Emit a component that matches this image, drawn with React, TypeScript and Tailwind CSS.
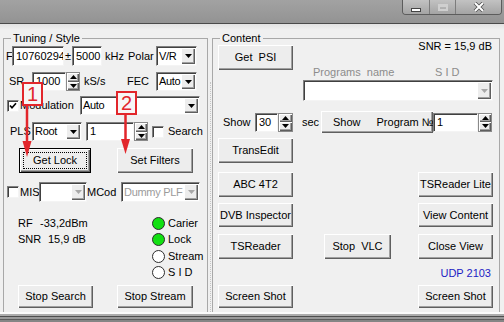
import React from 'react';

const raised =
  'bg-[#ededed] shadow-[inset_1px_1px_0_#ffffff,inset_-1px_-1px_0_#5f5f5f,inset_-2px_-2px_0_#a0a0a0]';
const sunken =
  'bg-white border border-t-[#7f7f7f] border-l-[#7f7f7f] border-r-[#f4f4f4] border-b-[#f4f4f4] shadow-[inset_1px_1px_0_#404040]';

function Btn({ children, className = '', focus = false }: { children: React.ReactNode; className?: string; focus?: boolean }) {
  return (
    <div
      className={`relative flex items-center justify-center whitespace-pre text-black ${raised} ${focus ? 'border border-black' : ''} ${className}`}
    >
      {focus && <div className="absolute inset-[3px] border border-dotted border-black" />}
      {children}
    </div>
  );
}

function Field({ text, className = '' }: { text: string; className?: string }) {
  return <div className={`flex items-center pl-[3px] overflow-hidden whitespace-nowrap ${sunken} ${className}`}>{text}</div>;
}

function Down({ dim = false }: { dim?: boolean }) {
  return (
    <svg width="7" height="4" viewBox="0 0 7 4">
      <path d="M0 0h7L3.5 4z" fill={dim ? '#a8a8a8' : '#000'} />
    </svg>
  );
}

function Up() {
  return (
    <svg width="7" height="4" viewBox="0 0 7 4">
      <path d="M0 4h7L3.5 0z" fill="#000" />
    </svg>
  );
}

function Combo({ text = '', className = '', disabled = false }: { text?: string; className?: string; disabled?: boolean }) {
  return (
    <div className={`flex p-[1px] ${sunken} ${className}`}>
      <div className={`flex-1 min-w-0 flex items-center pl-[1px] tracking-[-0.3px] overflow-hidden whitespace-nowrap ${disabled ? 'text-[#9b9b9b]' : 'text-black'}`}>
        {text}
      </div>
      <div className={`w-[14px] shrink-0 flex items-center justify-center ${raised}`}>
        <Down dim={disabled} />
      </div>
    </div>
  );
}

function Spin({ className = '' }: { className?: string }) {
  return (
    <div className={`flex flex-col border border-[#8a8a8a] ${className}`}>
      <div className={`flex-1 flex items-center justify-center ${raised}`}>
        <Up />
      </div>
      <div className={`flex-1 flex items-center justify-center ${raised}`}>
        <Down />
      </div>
    </div>
  );
}

function Check({ checked = false, className = '' }: { checked?: boolean; className?: string }) {
  return (
    <div className={`w-[12px] h-[12px] shrink-0 flex items-center justify-center ${sunken} ${className}`}>
      {checked && (
        <svg width="8" height="8" viewBox="0 0 8 8">
          <path d="M1 3.5 3 5.7 7 1.3" stroke="#000" strokeWidth="1.7" fill="none" />
        </svg>
      )}
    </div>
  );
}

function Led({ on = false, label }: { on?: boolean; label: string }) {
  return (
    <div className="flex items-center h-[16.5px]">
      <div className={`w-[13px] h-[13px] rounded-full border border-[#2c2c2c] ${on ? 'bg-[#12e012]' : 'bg-white'}`} />
      <span className="ml-[3px]">{label}</span>
    </div>
  );
}

export default function App() {
  return (
    <div className="relative w-[504px] h-[322px] overflow-hidden flex flex-col bg-[#f0f0f0] text-[11px] leading-[13px] text-black font-['Liberation_Sans',Arial,sans-serif]">
      {/* title bar */}
      <div className="h-[23px] shrink-0 flex justify-end pr-[2px] bg-linear-to-b from-[#a2a2a2] to-[#939393]">
        <div className="flex h-[15px] border border-t-0 border-[#5c5c5c] rounded-b-[4px] overflow-hidden">
          <div className="w-[27px] flex items-end justify-center pb-[2px] border-r border-[#7c7c7c] bg-linear-to-b from-[#c2c2c2] to-[#a4a4a4]">
            <div className="w-[10px] h-[4px] bg-white border border-[#444]" />
          </div>
          <div className="w-[26px] flex items-center justify-center border-r border-[#7c7c7c] bg-linear-to-b from-[#c2c2c2] to-[#a4a4a4]">
            <div className="w-[10px] h-[7px] border-2 border-[#cfcfcf] border-t-[3px]" />
          </div>
          <div className="w-[45px] flex items-center justify-center bg-linear-to-b from-[#c2c2c2] to-[#a4a4a4]">
            <svg width="12" height="10" viewBox="0 0 12 10">
              <path d="M2 1l8 8M10 1l-8 8" stroke="#505050" strokeWidth="3.6" />
              <path d="M2 1l8 8M10 1l-8 8" stroke="#fff" strokeWidth="2" />
            </svg>
          </div>
        </div>
      </div>
      <div className="h-[1px] shrink-0 bg-[#4a4a4a]" />

      {/* body */}
      <div className="h-[288px] shrink-0 flex pt-[8px] pl-[3px] overflow-hidden bg-linear-to-b from-[#e2e2e2] to-[#f0f0f0] to-[6px]">
        {/* Tuning / Style */}
        <fieldset className="w-[205px] h-[300px] shrink-0 border border-[#a8a8a8]">
          <legend className="ml-[7px] px-[2px] leading-[13px]">Tuning / Style</legend>

          <div className="flex items-center h-[20px] mt-[1px]">
            <span className="w-[8px] pl-[2px]">F</span>
            <Field text="10760294" className="w-[52px] h-full" />
            <span className="w-[8px] text-center">±</span>
            <Field text="5000" className="w-[30px] h-full" />
            <span className="w-[26px] pl-[3px]">kHz</span>
            <span className="w-[28px]">Polar</span>
            <Combo text="V/R" className="w-[41px] h-full" />
          </div>

          <div className="flex items-center h-[19px] mt-[6px]">
            <span className="w-[28px] pl-[5px]">SR</span>
            <Field text="1000" className="w-[34px] h-full" />
            <Spin className="w-[14px] h-full" />
            <span className="w-[47px] pl-[4px]">kS/s</span>
            <span className="w-[29px]">FEC</span>
            <Combo text="Auto" className="w-[41px] h-full" />
          </div>

          <div className="flex items-center h-[19px] mt-[5px]">
            <Check checked className="ml-[3px]" />
            <span className="w-[61px] pl-[1px]">Modulation</span>
            <Combo text="Auto" className="w-[120px] h-full" />
          </div>

          <div className="flex items-center h-[19px] mt-[7px]">
            <span className="w-[28px] pl-[6px] overflow-hidden whitespace-nowrap">PLS</span>
            <Combo text="Root" className="w-[50px] h-full" />
            <Field text="1" className="w-[48px] h-full ml-[4px]" />
            <Spin className="w-[14px] h-full" />
            <Check className="ml-[4px]" />
            <span className="ml-[4px]">Search</span>
          </div>

          <div className="flex items-center h-[25px] mt-[7px]">
            <Btn focus className="w-[72px] h-full ml-[15px]">Get Lock</Btn>
            <Btn className="w-[76px] h-full ml-[26px]">Set Filters</Btn>
          </div>

          <div className="flex items-center h-[20px] mt-[9px]">
            <Check className="ml-[3px]" />
            <span className="w-[20px] pl-[1px]">MIS</span>
            <Combo disabled className="w-[48px] h-full" />
            <span className="w-[34px] overflow-hidden whitespace-nowrap">MCod</span>
            <Combo disabled text="Dummy PLF" className="w-[79px] h-full" />
          </div>

          <div className="flex mt-[13px]">
            <div className="w-[148px] pl-[14px]">
              <div className="flex items-center h-[16.5px]">
                <span className="w-[22px]">RF</span>
                <span>-33,2dBm</span>
              </div>
              <div className="flex items-center h-[16.5px]">
                <span className="w-[30px]">SNR</span>
                <span>15,9 dB</span>
              </div>
            </div>
            <div>
              <Led on label="Carier" />
              <Led on label="Lock" />
              <Led label="Stream" />
              <Led label="S I D" />
            </div>
          </div>

          <div className="flex items-center h-[23px] mt-[4px]">
            <Btn className="w-[75px] h-full ml-[14px]">Stop Search</Btn>
            <Btn className="w-[76px] h-full ml-[24px]">Stop Stream</Btn>
          </div>
        </fieldset>

        {/* splitter */}
        <div className="w-[4px] shrink-0 flex justify-center">
          <div className="mt-[50px] h-[240px] border-l border-dotted border-[#c4c4c4]" />
        </div>

        {/* Content */}
        <fieldset className="w-[288px] h-[300px] shrink-0 border border-[#a8a8a8]">
          <legend className="ml-[7px] px-[2px] leading-[13px]">Content</legend>

          <div className="flex items-start">
            <Btn className="w-[75px] h-[25px] ml-[5px]">Get  PSI</Btn>
            <div className="ml-[10px] w-[190px] -mt-[5px] flex flex-col">
              <div className="h-[13px] text-right pr-[1px]">SNR = 15,9 dB</div>
              <div className="h-[13px] mt-[13px] flex text-[#8c8c8c] whitespace-pre">
                <span className="w-[132px] pl-[10px]">Programs  name</span>
                <span>S I D</span>
              </div>
              <Combo disabled className="h-[21px] mt-[1px]" />
            </div>
          </div>

          <div className="flex items-center h-[22px] mt-[10px]">
            <span className="w-[32px] ml-[10px]">Show</span>
            <Field text="30" className="w-[23px] h-[19px]" />
            <Spin className="w-[15px] h-[19px]" />
            <span className="w-[28px] pl-[9px]">sec</span>
            <Btn className="w-[112px] h-full !justify-start pl-[12px] overflow-hidden">
              <span>Show</span>
              <span className="ml-[16px]">Program №</span>
            </Btn>
            <Field text="1" className="w-[45px] h-[19px]" />
            <Spin className="w-[14px] h-[19px]" />
          </div>

          <Btn className="w-[75px] h-[25px] ml-[5px] mt-[5px]">TransEdit</Btn>

          <div className="flex justify-between h-[25px] mt-[9px] pl-[5px] pr-[6px]">
            <Btn className="w-[75px] h-full">ABC 4T2</Btn>
            <Btn className="w-[75px] h-full">TSReader Lite</Btn>
          </div>

          <div className="flex justify-between h-[24px] mt-[6px] pl-[5px] pr-[6px]">
            <Btn className="w-[75px] h-full">DVB Inspector</Btn>
            <Btn className="w-[75px] h-full">View Content</Btn>
          </div>

          <div className="flex h-[25px] mt-[7px] pl-[5px] pr-[6px]">
            <Btn className="w-[75px] h-full">TSReader</Btn>
            <Btn className="w-[67px] h-full ml-[31px]">Stop  VLC</Btn>
            <Btn className="w-[75px] h-full ml-auto">Close View</Btn>
          </div>

          <div className="h-[13px] mt-[8px] text-right pr-[8px] text-[#1c1cc4]">UDP 2103</div>

          <div className="flex justify-between h-[23px] mt-[5px] pl-[5px] pr-[6px]">
            <Btn className="w-[75px] h-full">Screen Shot</Btn>
            <Btn className="w-[75px] h-full">Screen Shot</Btn>
          </div>
        </fieldset>
      </div>

      {/* bottom frame */}
      <div className="h-[2px] shrink-0 bg-[#fbfbfb]" />
      <div className="h-[2px] shrink-0 bg-[#acacac]" />
      <div className="h-[1px] shrink-0 bg-[#4e4e4e]" />
      <div className="h-[2px] shrink-0 bg-[#9a9a9a]" />
      <div className="h-[1px] shrink-0 bg-[#5c5c5c]" />
      <div className="h-[2px] shrink-0 bg-[#858585]" />

      {/* red annotations */}
      <div className="absolute left-[22px] top-[82px] w-[21px] h-[24px] flex items-center justify-center border-2 border-[#e2262b] bg-[#f6f6f6] text-[#e2262b] text-[20px] leading-[20px]">
        1
      </div>
      <div className="absolute left-[116px] top-[91px] w-[21px] h-[24px] flex items-center justify-center border-2 border-[#e2262b] bg-[#f6f6f6] text-[#e2262b] text-[20px] leading-[20px]">
        2
      </div>
      <svg className="absolute left-0 top-0 pointer-events-none" width="504" height="322" viewBox="0 0 504 322">
        <path d="M27 106V145" stroke="#e2262b" strokeWidth="2.5" />
        <path d="M22.5 141H31.5L27 157z" fill="#e2262b" />
        <path d="M125.5 115V143" stroke="#e2262b" strokeWidth="2.5" />
        <path d="M121 139H130L125.5 154z" fill="#e2262b" />
      </svg>
    </div>
  );
}
